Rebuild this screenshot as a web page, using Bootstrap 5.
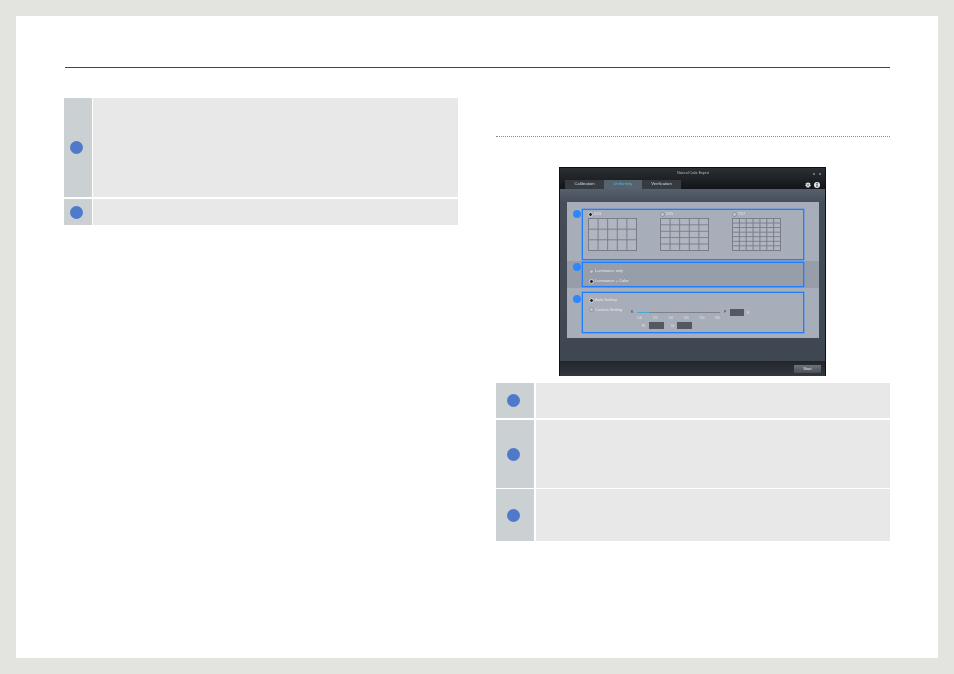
<!DOCTYPE html>
<html lang="en">
<head>
  <title>Natural Color Expert</title>
  <meta charset="utf-8">
  <meta name="viewport" content="width=device-width, initial-scale=1">
  <link href="https://cdn.jsdelivr.net/npm/bootstrap@5.3.3/dist/css/bootstrap.min.css" rel="stylesheet">
  <script src="https://cdn.jsdelivr.net/npm/bootstrap@5.3.3/dist/js/bootstrap.bundle.min.js"></script>
  <style>
    html, body { height: 100%; }
    body { background: #e3e4df; padding: 16px; font-family: "Liberation Sans", Arial, sans-serif; overflow: hidden; }
    .sheet { background: #fff; width: 922px; height: 642px; padding: 51px 48px 0 48px; }
    .top-rule { height: 1px; background: #444; margin-left: 1px; }
    .cols { margin-top: 30px; gap: 38px; }
    .col-left { width: 394px; }
    .col-right { width: 394px; }
    .spec-row { background: #fff; }
    .spec-num { background: #cbd0d3; flex: none; }
    .spec-body { background: #e8e8e8; flex: 1; }
    .num-dot { width: 13px; height: 13px; border-radius: 50%; background: #4f7acb; }
    .left-rows .spec-num { width: 28px; padding-right: 3px; }
    .left-rows .spec-row { gap: 1px; }
    .right-rows { margin-top: 7px; }
    .right-rows .spec-num { width: 38px; padding-right: 3px; }
    .right-rows .spec-row { gap: 2px; }
    .h-99 { height: 99px; margin-bottom: 2px; }
    .h-26 { height: 26px; }
    .h-35 { height: 35px; margin-bottom: 2px; }
    .h-68 { height: 68px; margin-bottom: 1px; }
    .h-52 { height: 52px; }
    .dot-rule { margin-top: 38px; border-top: 1px dotted #8a8f8c; height: 0; }

    /* monitor app screenshot, softened like a scaled down picture */
    .app-win { width: 267px; height: 209px; margin: 30px 0 0 63px; background: #0e1013; padding: 1px; color: #d4d8dd; font-size: 4px; line-height: 1; filter: blur(.35px); }
    .app-title { height: 12px; background: linear-gradient(#2b2f34, #1d2024); font-size: 3.5px; color: #b8bcc1; }
    .title-name { flex: 1; text-align: center; padding-left: 13px; }
    .win-btn { width: 2px; height: 2px; background: #6a7078; margin-right: 4px; }
    .app-tabs { height: 9px; background: linear-gradient(#1d2024, #121417); padding: 0 5px 0 5px; }
    .app-tab { width: 39px; height: 9px; background: #363b42; font-size: 4.2px; }
    .app-tab.on { background: #56636f; color: #55b4dc; width: 38px; }
    .tab-icons { margin-left: auto; gap: 3px; }
    .app-main { height: 172px; background: linear-gradient(#56606c 0, #454d59 14px, #3f4752 100%); padding: 13px 6px 0 7px; }
    .app-panel { height: 136px; background: #a8aeb9; }
    .pan-sec { padding-left: 6px; }
    .sec-a { height: 59px; padding-top: 7px; }
    .sec-b { height: 27px; padding-top: 1px; background: #989ea9; }
    .sec-c { height: 50px; padding-top: 4px; }
    .blue-dot { width: 8px; height: 8px; border-radius: 50%; background: #2f86ff; flex: none; margin-right: 1px; }
    .sec-a .blue-dot { margin-top: 1px; }
    .sec-b .blue-dot { margin-top: 1px; }
    .sec-c .blue-dot { margin-top: 3px; }
    .blue-box { width: 222px; border: 1px solid #1f7dff; box-shadow: 0 0 0 .4px #2f86ff; color: #e4e6ea; }
    .sec-a .blue-box { height: 51px; padding-left: 5px; gap: 23px; }
    .sec-b .blue-box { height: 25px; padding: 5px 0 0 6px; gap: 4px; }
    .sec-c .blue-box { height: 41px; padding: 4px 0 0 6px; }
    .grid-lbl { height: 8px; }
    .radio-dot { width: 5px; height: 5px; border-radius: 50%; background: #c3c7ce; border: 1px solid #8c929c; margin-right: 1px; flex: none; }
    .radio-dot.on { background: #23262b; border-color: #d8dbe0; }
    .mon-grid { width: 49px; height: 33px; border-right: 1px solid #777d89; border-bottom: 1px solid #777d89; background-color: #b0b5bf;
      background-image: linear-gradient(#777d89 1px, transparent 1px), linear-gradient(90deg, #777d89 1px, transparent 1px); }
    .grid-53 { background-size: 9.6px 10.67px; }
    .grid-55 { background-size: 9.6px 6.4px; }
    .grid-77 { background-size: 6.86px 4.57px; }
    .opt-line { height: 6px; }
    .custom-line { margin-top: 6px; height: 7px; }
    .custom-lbl { width: 42px; margin-top: -6px; }
    .slide-end { width: 6px; font-size: 3.5px; color: #2a2e33; }
    .slide-track { width: 83px; height: 1px; background: #7d838d; }
    .slide-fill { width: 12px; height: 1px; background: #4da6d8; }
    .val-box { background: #55595f; height: 7px; flex: none; }
    .val-a { width: 14px; margin-right: 3px; }
    .tick-line { margin-left: 48px; width: 83px; height: 5px; font-size: 3px; color: #dfe2e6; padding-top: 1px; }
    .rg-line { margin: 1px 0 0 53px; }
    .rg-lbl { width: 7px; }
    .val-b { width: 15px; }
    .g-lbl { margin-left: 7px; width: 6px; }
    .app-foot { height: 15px; background: linear-gradient(#22262b, #33383f); padding-right: 4px; }
    .start-btn { width: 27px; height: 8px; background: linear-gradient(#6d7279, #4b5056); color: #e8eaec; font-size: 4px; }
  </style>
</head>
<body>
  <div class="sheet">
    <div class="top-rule"></div>
    <div class="d-flex cols">

      <!-- Left table -->
      <div class="col-left left-rows">
        <div class="d-flex spec-row h-99">
          <div class="spec-num d-flex align-items-center justify-content-center"><span class="num-dot"></span></div>
          <div class="spec-body"></div>
        </div>
        <div class="d-flex spec-row h-26">
          <div class="spec-num d-flex align-items-center justify-content-center"><span class="num-dot"></span></div>
          <div class="spec-body"></div>
        </div>
      </div>

      <!-- Right column -->
      <div class="col-right">
        <div class="dot-rule"></div>

        <div class="app-win">
          <div class="app-title d-flex align-items-center">
            <div class="title-name">Natural Color Expert</div>
            <span class="win-btn"></span><span class="win-btn"></span>
          </div>
          <div class="app-tabs d-flex align-items-center">
            <div class="app-tab d-flex align-items-center justify-content-center">Calibration</div>
            <div class="app-tab on d-flex align-items-center justify-content-center">Uniformity</div>
            <div class="app-tab d-flex align-items-center justify-content-center">Verification</div>
            <div class="tab-icons d-flex align-items-center">
              <svg width="6" height="6" viewBox="0 0 6 6"><circle cx="3" cy="3" r="2" fill="#e6e8ea" stroke="#e6e8ea" stroke-width="1.4" stroke-dasharray="1 .6"/><circle cx="3" cy="3" r=".8" fill="#33373c"/></svg>
              <svg width="6" height="6" viewBox="0 0 6 6"><circle cx="3" cy="3" r="3" fill="#e6e8ea"/><path d="M3 2.4V5M2.4 1.5h1.2" stroke="#2a2d31" stroke-width="1"/></svg>
            </div>
          </div>

          <div class="app-main">
            <div class="app-panel">
              <div class="pan-sec sec-a d-flex">
                <span class="blue-dot"></span>
                <div class="blue-box d-flex">
                  <div>
                    <div class="grid-lbl d-flex align-items-center"><span class="radio-dot on"></span>5X3</div>
                    <div class="mon-grid grid-53"></div>
                  </div>
                  <div>
                    <div class="grid-lbl d-flex align-items-center"><span class="radio-dot"></span>5X5</div>
                    <div class="mon-grid grid-55"></div>
                  </div>
                  <div>
                    <div class="grid-lbl d-flex align-items-center"><span class="radio-dot"></span>7X7</div>
                    <div class="mon-grid grid-77"></div>
                  </div>
                </div>
              </div>
              <div class="pan-sec sec-b d-flex">
                <span class="blue-dot"></span>
                <div class="blue-box d-flex flex-column">
                  <div class="opt-line d-flex align-items-center"><span class="radio-dot"></span>Luminance only</div>
                  <div class="opt-line d-flex align-items-center"><span class="radio-dot on"></span>Luminance + Color</div>
                </div>
              </div>
              <div class="pan-sec sec-c d-flex">
                <span class="blue-dot"></span>
                <div class="blue-box">
                  <div class="opt-line d-flex align-items-center"><span class="radio-dot on"></span>Auto Setting</div>
                  <div class="custom-line d-flex align-items-center">
                    <div class="custom-lbl d-flex align-items-center"><span class="radio-dot"></span>Custom Setting</div>
                    <span class="slide-end">K</span>
                    <div class="slide-track"><div class="slide-fill"></div></div>
                    <span class="slide-end ms-1">P</span>
                    <span class="val-box val-a"></span>
                    <span>K</span>
                  </div>
                  <div class="tick-line d-flex justify-content-between"><span>100</span><span>120</span><span>150</span><span>200</span><span>250</span><span>300</span></div>
                  <div class="rg-line d-flex align-items-center">
                    <span class="rg-lbl">R:</span><span class="val-box val-b"></span>
                    <span class="g-lbl">G:</span><span class="val-box val-b"></span>
                  </div>
                </div>
              </div>
            </div>
          </div>

          <div class="app-foot d-flex align-items-center justify-content-end">
            <div class="start-btn d-flex align-items-center justify-content-center">Start</div>
          </div>
        </div>

        <div class="right-rows">
          <div class="d-flex spec-row h-35">
            <div class="spec-num d-flex align-items-center justify-content-center"><span class="num-dot"></span></div>
            <div class="spec-body"></div>
          </div>
          <div class="d-flex spec-row h-68">
            <div class="spec-num d-flex align-items-center justify-content-center"><span class="num-dot"></span></div>
            <div class="spec-body"></div>
          </div>
          <div class="d-flex spec-row h-52">
            <div class="spec-num d-flex align-items-center justify-content-center"><span class="num-dot"></span></div>
            <div class="spec-body"></div>
          </div>
        </div>
      </div>
    </div>
  </div>
</body>
</html>
